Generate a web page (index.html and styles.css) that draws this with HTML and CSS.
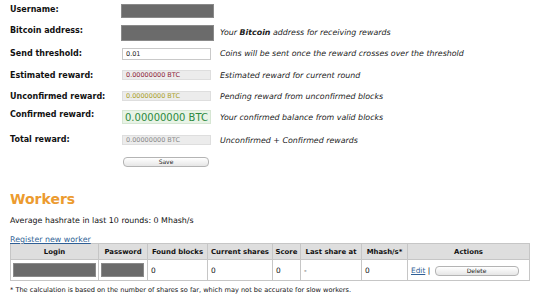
FILE: index.html
```html
<!DOCTYPE html>
<html lang="en">
<head>
    <meta charset="UTF-8">
    <title>Account</title>
    <link rel="stylesheet" href="styles.css">
</head>
<body>
    <div class="profile">
        <div class="profile__row profile__row--user">
            <label class="profile__label">Username:</label>
            <div class="profile__field"><span class="hidden-box hidden-box--user"></span></div>
            <span class="profile__hint"></span>
        </div>
        <div class="profile__row profile__row--address">
            <label class="profile__label">Bitcoin address:</label>
            <div class="profile__field"><span class="hidden-box hidden-box--address"></span></div>
            <span class="profile__hint">Your <b>Bitcoin</b> address for receiving rewards</span>
        </div>
        <div class="profile__row profile__row--threshold">
            <label class="profile__label">Send threshold:</label>
            <div class="profile__field"><input class="profile__input" type="text" value="0.01"></div>
            <span class="profile__hint">Coins will be sent once the reward crosses over the threshold</span>
        </div>
        <div class="profile__row profile__row--estimated">
            <label class="profile__label">Estimated reward:</label>
            <div class="profile__field"><input class="profile__input profile__input--ro profile__input--estimated" type="text" value="0.00000000 BTC" readonly></div>
            <span class="profile__hint">Estimated reward for current round</span>
        </div>
        <div class="profile__row profile__row--unconfirmed">
            <label class="profile__label">Unconfirmed reward:</label>
            <div class="profile__field"><input class="profile__input profile__input--ro profile__input--unconfirmed" type="text" value="0.00000000 BTC" readonly></div>
            <span class="profile__hint">Pending reward from unconfirmed blocks</span>
        </div>
        <div class="profile__row profile__row--confirmed">
            <label class="profile__label">Confirmed reward:</label>
            <div class="profile__field"><input class="profile__input profile__input--confirmed" type="text" value="0.00000000 BTC" readonly></div>
            <span class="profile__hint">Your confirmed balance from valid blocks</span>
        </div>
        <div class="profile__row profile__row--total">
            <label class="profile__label">Total reward:</label>
            <div class="profile__field"><input class="profile__input profile__input--ro profile__input--total" type="text" value="0.00000000 BTC" readonly></div>
            <span class="profile__hint">Unconfirmed + Confirmed rewards</span>
        </div>
        <div class="profile__row profile__row--save">
            <span class="profile__label"></span>
            <div class="profile__field"><button class="btn btn--save">Save</button></div>
        </div>
    </div>

    <h2 class="workers__title">Workers</h2>
    <p class="workers__rate">Average hashrate in last 10 rounds: 0 Mhash/s</p>
    <a class="workers__register" href="#">Register new worker</a>

    <table class="workers">
        <tr>
            <th class="col-login">Login</th>
            <th class="col-pass">Password</th>
            <th class="col-found">Found blocks</th>
            <th class="col-shares">Current shares</th>
            <th class="col-score">Score</th>
            <th class="col-last">Last share at</th>
            <th class="col-mhash">Mhash/s*</th>
            <th class="col-actions">Actions</th>
        </tr>
        <tr>
            <td><span class="hidden-box hidden-box--login"></span></td>
            <td><span class="hidden-box hidden-box--pass"></span></td>
            <td>0</td>
            <td>0</td>
            <td>0</td>
            <td>-</td>
            <td>0</td>
            <td class="workers__actions"><a href="#">Edit</a> | <button class="btn btn--delete">Delete</button></td>
        </tr>
    </table>
    <p class="workers__note">* The calculation is based on the number of shares so far, which may not be accurate for slow workers.</p>
</body>
</html>
```

FILE: styles.css
```css
body {
    margin: 0;
    padding: 4px 10px 0 10px;
    font-family: "DejaVu Sans", Verdana, sans-serif;
    font-size: 8px;
    color: #111;
    background: #fff;
}
.profile__row {
    display: flex;
    align-items: flex-start;
}
.profile__row--user { height: 21px; }
.profile__row--address { height: 23px; }
.profile__row--threshold { height: 22px; }
.profile__row--estimated { height: 21px; }
.profile__row--unconfirmed { height: 19px; }
.profile__row--confirmed { height: 25px; }
.profile__row--total { height: 22px; }

.profile__label {
    width: 111px;
    flex-shrink: 0;
    font-weight: bold;
    font-size: 8px;
    padding-top: 1px;
}
.profile__row--confirmed .profile__label { padding-top: 0; }
.profile__row--total .profile__label { padding-top: 0; }
.profile__field {
    width: 99px;
    flex-shrink: 0;
}
.profile__hint {
    font-style: italic;
    font-size: 7.9px;
    color: #222;
    padding-top: 3px;
}
.profile__row--threshold .profile__hint,
.profile__row--estimated .profile__hint,
.profile__row--unconfirmed .profile__hint,
.profile__row--total .profile__hint { padding-top: 1px; }
.profile__row--confirmed .profile__hint { padding-top: 3px; }

.hidden-box {
    display: block;
    background: #6b6b6b;
    border: 1px solid #8a8a8a;
}
.hidden-box--user { width: 91px; height: 12px; }
.hidden-box--address { width: 91px; height: 14px; }
.hidden-box--login { width: 81px; height: 12px; }
.hidden-box--pass { width: 41px; height: 12px; }

.profile__input {
    box-sizing: border-box;
    width: 89px;
    height: 12px;
    margin: 0 0 0 1px;
    padding: 0 3px;
    border: 1px solid #c9c9c9;
    font-family: "DejaVu Sans", Verdana, sans-serif;
    font-size: 6.5px;
    color: #222;
    background: #fff;
    outline: none;
}
.profile__input--ro {
    height: 10px;
    background: #ececec;
    border-color: #dedede;
}
.profile__input--estimated { color: #8c2538; }
.profile__input--unconfirmed { color: #aaa028; }
.profile__input--total { color: #8a8a8a; }
.profile__input--confirmed {
    height: 14px;
    padding: 0 2px;
    font-size: 10px;
    color: #2c8a40;
    background: #e8f3e6;
    border-color: #d6e6d3;
}

.btn {
    box-sizing: border-box;
    height: 10px;
    padding: 0;
    border: 1px solid #b4b4b4;
    border-radius: 4px;
    background: linear-gradient(#ffffff, #e6e6e6);
    font-family: "DejaVu Sans", Verdana, sans-serif;
    font-size: 6px;
    color: #222;
    line-height: 8px;
}
.btn--save {
    width: 86px;
    margin: 0 0 0 2px;
}

.workers__title {
    margin: 24px 0 0 0;
    font-size: 14px;
    font-weight: bold;
    color: #ec9b2f;
    line-height: 16px;
}
.workers__rate {
    margin: 9px 0 0 0;
    font-size: 7.9px;
}
.workers__register {
    display: inline-block;
    margin-top: 10px;
    font-size: 7.9px;
    color: #2f5f95;
}

.workers {
    border-collapse: collapse;
    width: 520px;
    margin-top: -1px;
}
.workers th,
.workers td {
    border: 1px solid #c6c6c6;
    padding: 0 3px;
    text-align: left;
    font-size: 7.4px;
    white-space: nowrap;
}
.workers th {
    background: #dedede;
    height: 15px;
    padding: 0 2px;
    text-align: center;
    font-weight: bold;
    font-size: 6.9px;
}
.workers td {
    height: 19px;
    padding-top: 1px;
}
.workers td:nth-child(1),
.workers td:nth-child(2) { padding: 0 2px; }
.col-login { width: 83px; }
.col-pass { width: 44px; }
.col-found { width: 55px; }
.col-shares { width: 60px; }
.col-score { width: 23px; }
.col-last { width: 56px; }
.col-mhash { width: 41px; }

.workers__actions a { color: #2f5f95; }
.btn--delete {
    width: 84px;
    margin-left: 2px;
    vertical-align: middle;
}
.workers__note {
    margin: 5px 0 0 0;
    font-size: 6.6px;
}
```
